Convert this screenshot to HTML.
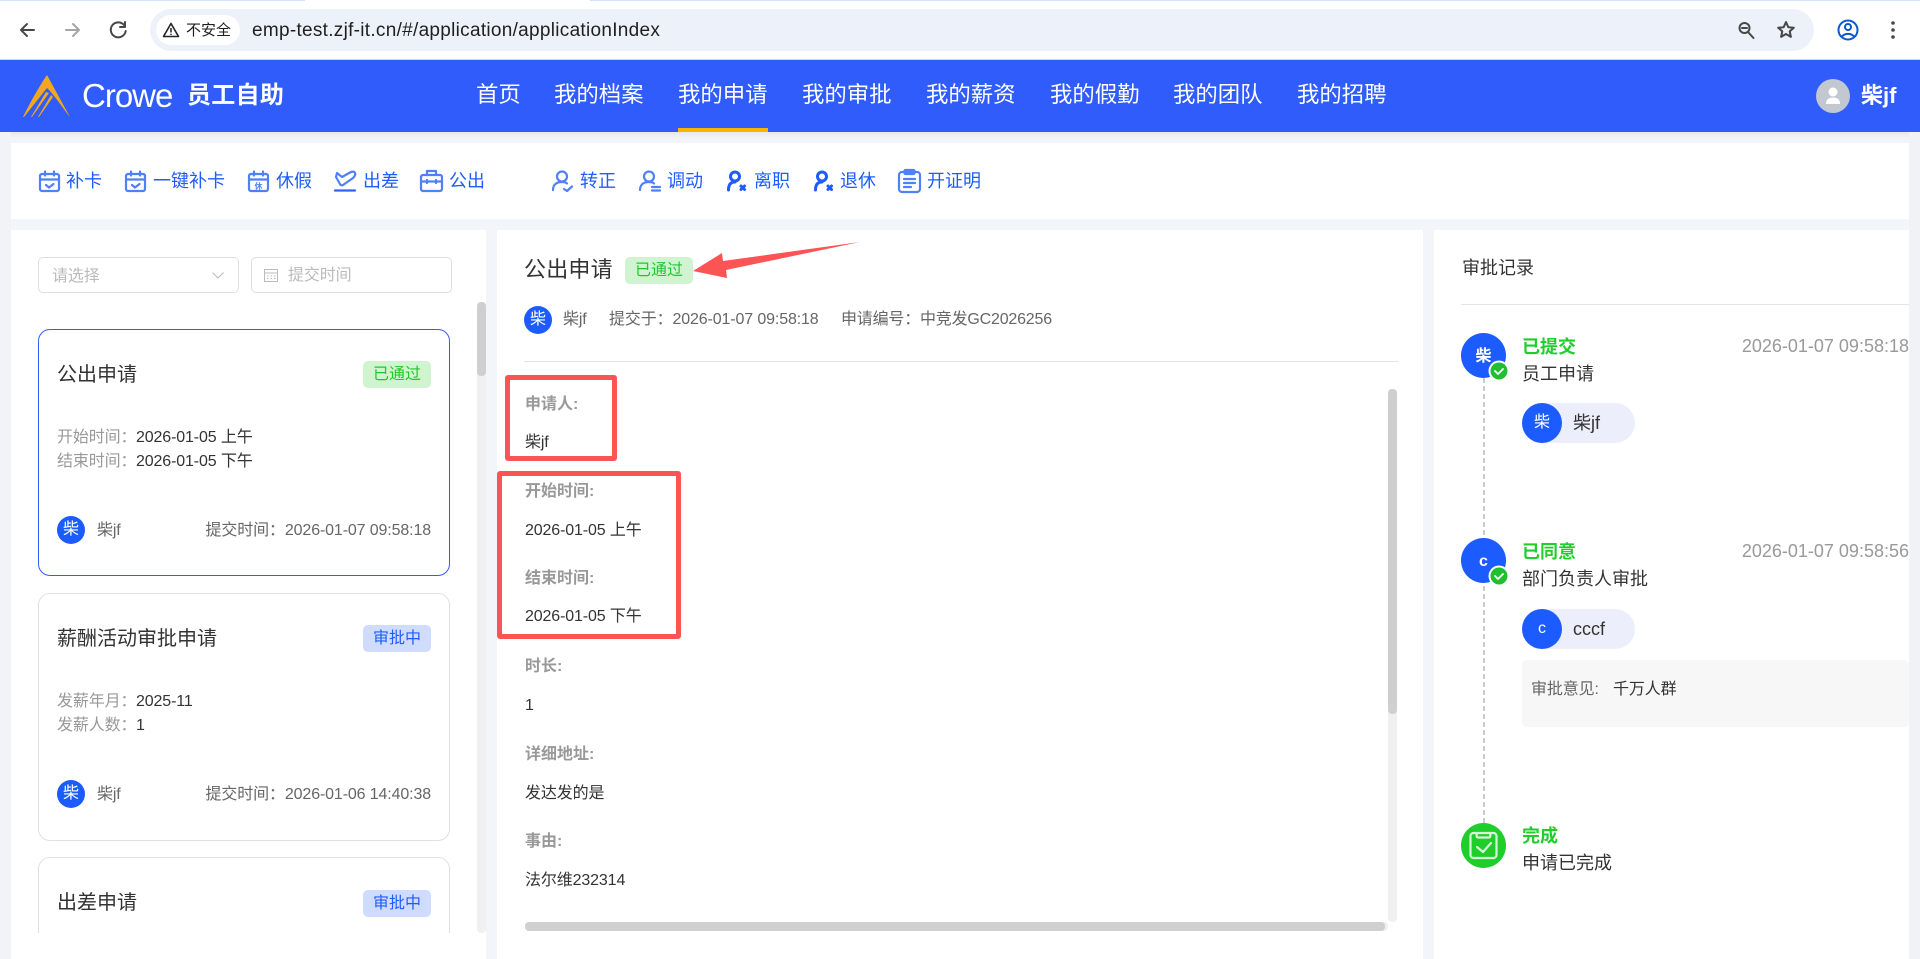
<!DOCTYPE html>
<html lang="zh-CN">
<head>
<meta charset="utf-8">
<title>我的申请</title>
<style>
html,body{margin:0;padding:0;width:1920px;height:959px;overflow:hidden;background:#f4f5fa;font-family:"Liberation Sans","Noto Sans CJK SC",sans-serif}
.a{position:absolute}
.t{position:absolute;white-space:nowrap;line-height:24px;height:24px;font-size:16px;color:#333;letter-spacing:-.13px}
.n{font-size:22.4px;color:#fff;line-height:30px;height:30px;top:80px;letter-spacing:0}
.b{font-size:18px;color:#1f5cff;top:169px;letter-spacing:0}
svg{position:absolute;overflow:visible}
.ic{fill:none;stroke:#4f80f8;stroke-width:2.2;stroke-linecap:round;stroke-linejoin:round}
.g{color:#999}.m{color:#666}
.card{position:absolute;left:38px;width:410px;background:#fff;border:1px solid #e0e0e0;border-radius:12px;box-sizing:content-box}
.badge{position:absolute;left:363px;width:68px;height:27px;border-radius:5px;font-size:16px;line-height:27px;text-align:center}
.pass{background:#d0f3d0;color:#1fc92c}
.ing{background:#d0dcff;color:#1f5cff}
.av{position:absolute;width:28px;height:28px;border-radius:50%;background:#1c5cff;color:#fff;font-size:16px;line-height:28px;text-align:center}
.lab{font-weight:bold;color:#999;left:525px;letter-spacing:0}
.val{left:525px;color:#333}
.big{position:absolute;left:1461px;width:45px;height:45px;border-radius:50%;background:#1c5cff;color:#fff;font-size:16px;font-weight:bold;line-height:47px;text-align:center}
.st{font-size:18px;font-weight:bold;color:#1fce2b;left:1522px;letter-spacing:0}
.tm{font-size:18px;color:#999;right:11px;letter-spacing:0}
.sub{font-size:18px;color:#333;left:1522px;letter-spacing:0}
.pill{position:absolute;left:1522px;width:113px;height:40px;border-radius:20px;background:#eceffb}
.pill i{position:absolute;left:0;top:0;width:40px;height:40px;border-radius:50%;background:#1c5cff;color:#fff;font-style:normal;font-size:16px;line-height:40px;text-align:center}
.pill b{position:absolute;left:51px;top:8px;font-weight:normal;font-size:18px;line-height:24px;color:#333}
.red{position:absolute;box-sizing:border-box;border:5px solid #fb5454;border-radius:3px}
</style>
</head>
<body>

<!-- browser chrome -->
<div class="a" style="left:0;top:0;width:1920px;height:60px;background:#fff;border-bottom:1px solid #d6dae2;box-sizing:border-box"></div>
<div class="a" style="left:0;top:0;width:305px;height:1px;background:#d3e3fd"></div>
<div class="a" style="left:590px;top:0;width:1330px;height:1px;background:#d3e3fd"></div>
<div class="a" style="left:150px;top:9px;width:1664px;height:42px;border-radius:21px;background:#edf2fa"></div>
<div class="a" style="left:156px;top:15px;width:84px;height:30px;border-radius:15px;background:#fff"></div>
<svg style="left:0;top:0" width="1920" height="60" viewBox="0 0 1920 60">
  <g fill="none" stroke="#474747" stroke-width="2" stroke-linecap="round" stroke-linejoin="round">
    <path d="M34 30H21M27 24l-6 6 6 6"/>
    <path d="M66 30h13M73 24l6 6-6 6" stroke="#a5a5a5"/>
    <path d="M124 25a7.500 7.500 0 1 0 1.700 6M125 22v5h-5" />
    <circle cx="1744.500" cy="28" r="5"/><path d="M1748 32l5.500 6M1742 28h5"/>
    <path d="M1786 22l2.300 5.200 5.500.5-4.100 3.700 1.200 5.500-4.900-2.900-4.900 2.900 1.200-5.500-4.100-3.700 5.500-.5z"/>
  </g>
  <circle cx="1848" cy="30" r="9.500" fill="none" stroke="#0b57d0" stroke-width="2"/>
  <circle cx="1848" cy="27" r="3" fill="none" stroke="#0b57d0" stroke-width="2"/>
  <path d="M1842 36.500c3-3.500 9-3.500 12 0" fill="none" stroke="#0b57d0" stroke-width="2"/>
  <g fill="#474747"><circle cx="1893" cy="23" r="1.800"/><circle cx="1893" cy="30" r="1.800"/><circle cx="1893" cy="37" r="1.800"/></g>
</svg>
<svg style="left:162px;top:22px" width="18" height="16" viewBox="0 0 18 16"><path d="M9 1.500L16.500 14.500H1.500Z" fill="none" stroke="#222" stroke-width="1.600" stroke-linejoin="round"/><path d="M9 6v4.500M9 11.800v1.200" stroke="#222" stroke-width="1.500"/></svg>
<div class="t" style="left:186px;top:19px;font-size:15px;color:#1f1f1f;letter-spacing:0">不安全</div>
<div class="t" style="left:252px;top:19px;font-size:19px;color:#1f1f1f;letter-spacing:.29px">emp-test.zjf-it.cn/#/application/applicationIndex</div>

<!-- header -->
<div class="a" style="left:0;top:60px;width:1920px;height:72px;background:#2f5cfa;box-shadow:0 2px 8px rgba(0,0,0,.08)"></div>
<svg style="left:23px;top:75px" width="48" height="43" viewBox="0 0 48 43">
  <g fill="#f2a71e">
    <path d="M24 0L47 42C42 36 34 24 26 15L24 13 1 42 0 42C6 30 15 13 24 0Z"/>
    <path d="M23 17L26 18 9 42 8 42Z"/>
    <path d="M28 20L30 22 16 42 15 42Z"/>
  </g>
</svg>
<div class="t" style="left:82px;top:78px;font-size:33px;line-height:36px;height:36px;color:#fff;letter-spacing:-1px">Crowe</div>
<div class="t" style="left:187px;top:81px;font-size:24px;line-height:30px;height:30px;font-weight:bold;color:#fff;letter-spacing:.3px">员工自助</div>
<div class="t n" style="left:476px">首页</div>
<div class="t n" style="left:554px">我的档案</div>
<div class="t n" style="left:678px">我的申请</div>
<div class="t n" style="left:802px">我的审批</div>
<div class="t n" style="left:926px">我的薪资</div>
<div class="t n" style="left:1050px">我的假勤</div>
<div class="t n" style="left:1173px">我的团队</div>
<div class="t n" style="left:1297px">我的招聘</div>
<div class="a" style="left:678px;top:128px;width:90px;height:4px;background:#f7b500"></div>
<div class="a" style="left:1816px;top:79px;width:34px;height:34px;border-radius:50%;background:#c3c7d0"></div>
<svg style="left:1816px;top:79px" width="34" height="34" viewBox="0 0 34 34"><circle cx="17" cy="13" r="4.500" fill="#fff"/><path d="M10 25c0-5 3-6.500 7-6.500s7 1.500 7 6.500z" fill="#fff"/></svg>
<div class="t" style="left:1861px;top:81px;font-size:22px;line-height:30px;height:30px;font-weight:bold;color:#fff;letter-spacing:0">柴jf</div>

<!-- panels -->
<div class="a" style="left:0;top:132px;width:11px;height:827px;background:#f1f3f7"></div>
<div class="a" style="left:1909px;top:132px;width:11px;height:827px;background:#f1f2f6"></div>
<div class="a" style="left:11px;top:143px;width:1898px;height:76px;background:#fff"></div>
<div class="a" style="left:11px;top:230px;width:475px;height:729px;background:#fff"></div>
<div class="a" style="left:497px;top:230px;width:926px;height:729px;background:#fff"></div>
<div class="a" style="left:1434px;top:230px;width:475px;height:729px;background:#fff"></div>

<!-- toolbar -->
<svg class="ic" style="left:39px;top:170px" width="22" height="22" viewBox="0 0 22 22"><rect x="1" y="4" width="19" height="17" rx="2"/><path d="M1 9.500h19M6 1.500v4M15 1.500v4M7 15l3 2.500 4.500-3.500"/></svg>
<div class="t b" style="left:66px">补卡</div>
<svg class="ic" style="left:125px;top:170px" width="22" height="22" viewBox="0 0 22 22"><rect x="1" y="4" width="19" height="17" rx="2"/><path d="M1 9.500h19M6 1.500v4M15 1.500v4M7 15l3 2.500 4.500-3.500"/></svg>
<div class="t b" style="left:153px">一键补卡</div>
<svg class="ic" style="left:248px;top:170px" width="22" height="22" viewBox="0 0 22 22"><rect x="1" y="4" width="19" height="17" rx="2"/><path d="M1 9.500h19M6 1.500v4M15 1.500v4"/><text x="10.500" y="19" font-size="8" font-weight="bold" text-anchor="middle" fill="#4f80f8" stroke="none">休</text></svg>
<div class="t b" style="left:276px">休假</div>
<svg class="ic" style="left:334px;top:170px" width="22" height="22" viewBox="0 0 22 22"><path d="M3 3l5 4 9-5q3-1 4 1t-2 5L9 15q-2 1-3-1L2 7z"/><path d="M1 20.500h20" stroke="#2f63f5"/></svg>
<div class="t b" style="left:363px">出差</div>
<svg class="ic" style="left:420px;top:169px" width="23" height="23" viewBox="0 0 23 23"><rect x="1" y="6" width="21" height="16" rx="2"/><path d="M7 6V2h9v4M1 12.500h21M7 11v3M16 11v3"/></svg>
<div class="t b" style="left:449px">公出</div>

<svg class="ic" style="left:552px;top:170px" width="22" height="22" viewBox="0 0 22 22"><circle cx="10" cy="6.500" r="5"/><path d="M1 20c0-5 3-8 9-8 2 0 4 .5 5 1.500M12 19l3 2 5-4.500"/></svg>
<div class="t b" style="left:580px">转正</div>
<svg class="ic" style="left:639px;top:170px" width="22" height="22" viewBox="0 0 22 22"><circle cx="10" cy="6.500" r="5"/><path d="M1 20c0-5 3-8 9-8 2 0 4 .5 5 1.500M13 17h8M13 20.500h8"/></svg>
<div class="t b" style="left:667px">调动</div>
<svg class="ic" style="left:727px;top:170px;stroke:#1f5cff;stroke-width:3" width="20" height="22" viewBox="0 0 20 22"><circle cx="8" cy="6.500" r="4.500"/><path d="M1.500 20c0-5 2-8 6.500-8M14 16l3.500 3.500M17.500 16L14 19.500"/></svg>
<div class="t b" style="left:754px">离职</div>
<svg class="ic" style="left:814px;top:170px;stroke:#1f5cff;stroke-width:3" width="20" height="22" viewBox="0 0 20 22"><circle cx="8" cy="6.500" r="4.500"/><path d="M1.500 20c0-5 2-8 6.500-8M14 16l3.500 3.500M17.500 16L14 19.500"/></svg>
<div class="t b" style="left:840px">退休</div>
<svg class="ic" style="left:898px;top:169px" width="23" height="23" viewBox="0 0 23 23"><rect x="1" y="3" width="21" height="20" rx="3"/><rect x="6.500" y="1" width="10" height="4" rx="1"/><path d="M6 10h11M6 14h11M6 18h7"/></svg>
<div class="t b" style="left:927px">开证明</div>

<!-- left panel -->
<div class="a" style="left:38px;top:257px;width:201px;height:36px;box-sizing:border-box;border:1px solid #dcdfe6;border-radius:5px"></div>
<div class="t" style="left:52px;top:265px;color:#bbb">请选择</div>
<svg style="left:212px;top:272px" width="12" height="7" viewBox="0 0 12 7"><path d="M.5.5L6 6l5.500-5.500" fill="none" stroke="#bbb" stroke-width="1"/></svg>
<div class="a" style="left:251px;top:257px;width:201px;height:36px;box-sizing:border-box;border:1px solid #dcdfe6;border-radius:5px"></div>
<svg style="left:264px;top:268px" width="14" height="14" viewBox="0 0 14 14"><rect x=".5" y="1.500" width="13" height="12" fill="none" stroke="#bbb"/><path d="M.5 5h13M3 8h1.500M6.500 8H8M10 8h1.500M3 10.500h1.500M6.500 10.500H8M10 10.500h1.500" stroke="#bbb"/></svg>
<div class="t" style="left:288px;top:264px;color:#bbb">提交时间</div>

<div class="a" style="left:477px;top:302px;width:9px;height:631px;background:#f0f0f0;border-radius:4px"></div>
<div class="a" style="left:477px;top:302px;width:9px;height:74px;background:#cfcfd0;border-radius:4px"></div>

<div class="card" style="top:329px;height:245px;border-color:#2f5cfa"></div>
<div class="t" style="left:57px;top:363px;font-size:20px;letter-spacing:0">公出申请</div>
<div class="badge pass" style="top:361px">已通过</div>
<div class="t g" style="left:57px;top:426px">开始时间：</div><div class="t" style="left:136px;top:426px">2026-01-05 上午</div>
<div class="t g" style="left:57px;top:450px">结束时间：</div><div class="t" style="left:136px;top:450px">2026-01-05 下午</div>
<div class="av" style="left:57px;top:516px">柴</div>
<div class="t m" style="left:97px;top:519px">柴jf</div>
<div class="t m" style="right:1489px;top:519px">提交时间：2026-01-07 09:58:18</div>

<div class="card" style="top:593px;height:246px"></div>
<div class="t" style="left:57px;top:627px;font-size:20px;letter-spacing:0">薪酬活动审批申请</div>
<div class="badge ing" style="top:625px">审批中</div>
<div class="t g" style="left:57px;top:690px">发薪年月：</div><div class="t" style="left:136px;top:690px">2025-11</div>
<div class="t g" style="left:57px;top:714px">发薪人数：</div><div class="t" style="left:136px;top:714px">1</div>
<div class="av" style="left:57px;top:780px">柴</div>
<div class="t m" style="left:97px;top:783px">柴jf</div>
<div class="t m" style="right:1489px;top:783px">提交时间：2026-01-06 14:40:38</div>

<div class="a" style="left:38px;top:857px;width:412px;height:76px;overflow:hidden"><div class="card" style="left:0;top:0;height:95px"></div></div>
<div class="t" style="left:57px;top:891px;font-size:20px;letter-spacing:0">出差申请</div>
<div class="badge ing" style="top:890px">审批中</div>

<!-- middle panel -->
<div class="t" style="left:524px;top:258px;font-size:22px;letter-spacing:.2px">公出申请</div>
<div class="badge pass" style="left:625px;top:257px">已通过</div>
<div class="av" style="left:524px;top:306px">柴</div>
<div class="t m" style="left:563px;top:308px">柴jf</div>
<div class="t m" style="left:609px;top:308px">提交于：2026-01-07 09:58:18</div>
<div class="t m" style="left:841px;top:308px;letter-spacing:-.2px">申请编号：中竞发GC2026256</div>
<div class="a" style="left:524px;top:361px;width:874px;height:1px;background:#e4e4e4"></div>

<div class="t lab" style="top:393px">申请人:</div>
<div class="t val" style="top:431px">柴jf</div>
<div class="t lab" style="top:480px">开始时间:</div>
<div class="t val" style="top:519px">2026-01-05 上午</div>
<div class="t lab" style="top:567px">结束时间:</div>
<div class="t val" style="top:605px">2026-01-05 下午</div>
<div class="t lab" style="top:655px">时长:</div>
<div class="t val" style="top:694px">1</div>
<div class="t lab" style="top:743px">详细地址:</div>
<div class="t val" style="top:782px">发达发的是</div>
<div class="t lab" style="top:830px">事由:</div>
<div class="t val" style="top:869px">法尔维232314</div>

<div class="a" style="left:1388px;top:389px;width:9px;height:533px;background:#f0f0f0;border-radius:4px"></div>
<div class="a" style="left:1388px;top:389px;width:9px;height:325px;background:#cfcfd0;border-radius:4px"></div>
<div class="a" style="left:525px;top:922px;width:863px;height:9px;background:#f0f0f0;border-radius:4px"></div>
<div class="a" style="left:525px;top:922px;width:860px;height:9px;background:#d0d0d1;border-radius:4px"></div>

<!-- annotations -->
<div class="red" style="left:505px;top:375px;width:112px;height:86px"></div>
<div class="red" style="left:497px;top:471px;width:184px;height:168px"></div>
<svg style="left:0;top:0" width="1920" height="959" viewBox="0 0 1920 959"><polygon points="860,242 723,261 722,253 693,271 727,278 726,270" fill="#fb5454"/></svg>

<!-- right panel -->
<div class="t" style="left:1462px;top:256px;font-size:18px;letter-spacing:0">审批记录</div>
<div class="a" style="left:1461px;top:304px;width:448px;height:1px;background:#e4e4ea"></div>
<div class="a" style="left:1483px;top:378px;width:2px;height:446px;background:repeating-linear-gradient(#cccccc 0 5px,transparent 5px 8px)"></div>

<div class="big" style="top:333px">柴</div>
<svg style="left:1488px;top:360px" width="22" height="22" viewBox="0 0 22 22"><circle cx="11" cy="11" r="10.500" fill="#fff"/><circle cx="11" cy="11" r="8.500" fill="#1fbf2f"/><path d="M7 11l3 3 5-5" fill="none" stroke="#fff" stroke-width="1.800" stroke-linecap="round" stroke-linejoin="round"/></svg>
<div class="t st" style="top:335px">已提交</div>
<div class="t tm" style="top:334px">2026-01-07 09:58:18</div>
<div class="t sub" style="top:362px">员工申请</div>
<div class="pill" style="top:403px"><i>柴</i><b>柴jf</b></div>

<div class="big" style="top:538px">c</div>
<svg style="left:1488px;top:565px" width="22" height="22" viewBox="0 0 22 22"><circle cx="11" cy="11" r="10.500" fill="#fff"/><circle cx="11" cy="11" r="8.500" fill="#1fbf2f"/><path d="M7 11l3 3 5-5" fill="none" stroke="#fff" stroke-width="1.800" stroke-linecap="round" stroke-linejoin="round"/></svg>
<div class="t st" style="top:540px">已同意</div>
<div class="t tm" style="top:539px">2026-01-07 09:58:56</div>
<div class="t sub" style="top:567px">部门负责人审批</div>
<div class="pill" style="top:609px"><i>c</i><b>cccf</b></div>
<div class="a" style="left:1522px;top:660px;width:387px;height:67px;background:#f7f7f7;border-radius:5px"></div>
<div class="t m" style="left:1531px;top:678px">审批意见:</div>
<div class="t" style="left:1613px;top:678px">千万人群</div>

<div class="big" style="top:823px;background:#1fce2b"></div>
<svg style="left:1461px;top:823px" width="45" height="45" viewBox="0 0 45 45"><rect x="9.500" y="10" width="26" height="25" rx="3" fill="none" stroke="#d8f5d8" stroke-width="2.200"/><path d="M15.700 10v3q0 1.500 1.500 1.500h10.600q1.500 0 1.500-1.500v-3M16 24l6 5 8-9" fill="none" stroke="#d8f5d8" stroke-width="2.200" stroke-linecap="round" stroke-linejoin="round"/></svg>
<div class="t st" style="top:824px">完成</div>
<div class="t sub" style="top:851px">申请已完成</div>

</body>
</html>
